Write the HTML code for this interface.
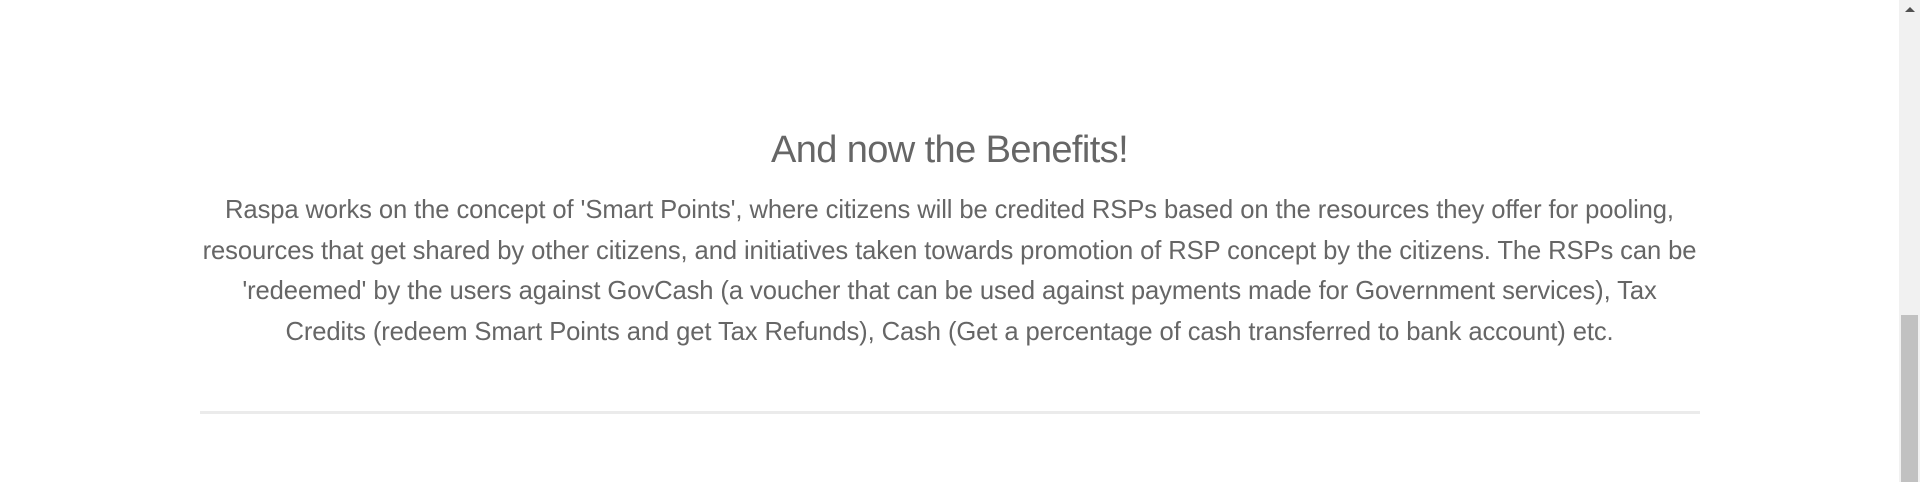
<!DOCTYPE html>
<html><head><meta charset="utf-8"><style>
html,body{margin:0;padding:0;width:1920px;height:482px;overflow:hidden;background:#fff;font-family:"Liberation Sans",sans-serif;}
.h{position:absolute;left:0;width:1899px;top:126px;text-align:center;font-size:38px;line-height:48px;color:#666;font-weight:300;letter-spacing:-0.6px;}
.p{position:absolute;left:0;width:1899px;top:190px;text-align:center;font-size:25.6px;line-height:40.5px;color:#666;white-space:nowrap;letter-spacing:-0.1px;}
.hr{position:absolute;left:200px;width:1500px;top:411px;height:3px;background:#ebebeb;}
.sb{position:absolute;left:1899px;top:0;width:21px;height:482px;background:#f1f1f1;}
.th{position:absolute;left:1901px;top:315px;width:17px;height:167px;background:#c1c1c1;}
.ar{position:absolute;left:1905px;top:7px;width:0;height:0;border-left:5px solid transparent;border-right:5px solid transparent;border-bottom:5px solid #505050;}
</style></head><body>
<div class="h">And now the Benefits!</div>
<div class="p">Raspa works on the concept of 'Smart Points', where citizens will be credited RSPs based on the resources they offer for pooling,<br>resources that get shared by other citizens, and initiatives taken towards promotion of RSP concept by the citizens. The RSPs can be<br>'redeemed' by the users against GovCash (a voucher that can be used against payments made for Government services), Tax<br>Credits (redeem Smart Points and get Tax Refunds), Cash (Get a percentage of cash transferred to bank account) etc.</div>
<div class="hr"></div>
<div class="sb"></div><div class="th"></div><div class="ar"></div>
</body></html>
